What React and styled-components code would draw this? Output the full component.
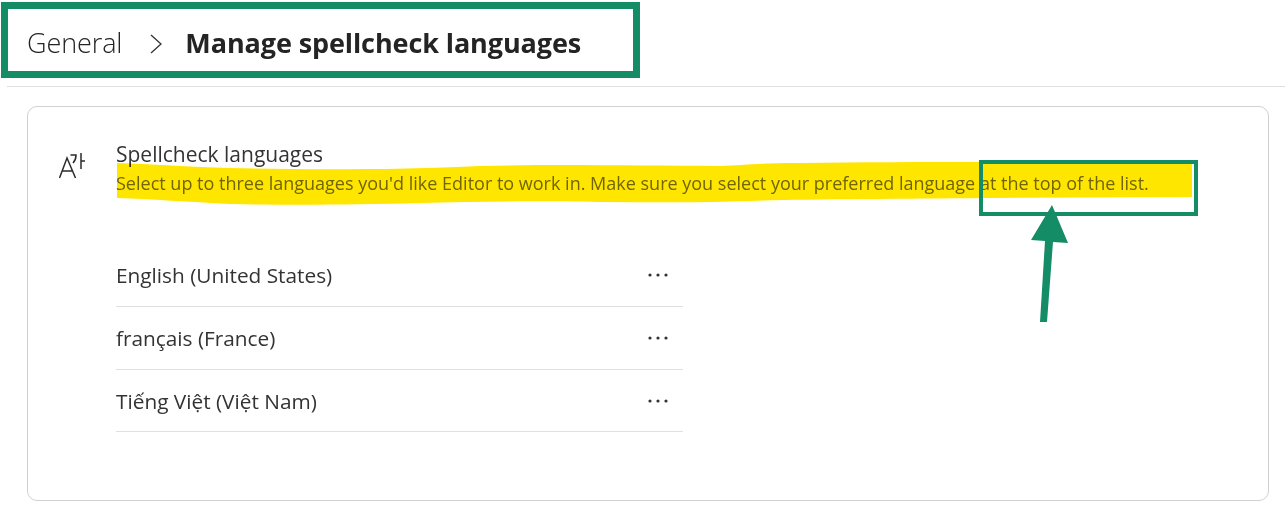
import React from 'react'
import styled, { createGlobalStyle } from 'styled-components'

const GlobalStyle = createGlobalStyle`
  html, body {
    margin: 0;
    padding: 0;
    background: #ffffff;
  }
  body {
    font-family: "Open Sans", "Noto Sans", "Liberation Sans", sans-serif;
    color: #242424;
  }
`

const Page = styled.div`
  position: relative;
  width: 1285px;
  height: 516px;
  overflow: hidden;
`

const Header = styled.header`
  height: 86px;
  margin-left: 7px;
  border-bottom: 1px solid #e0e0e0;
  box-sizing: content-box;
`

const Crumbs = styled.nav`
  display: flex;
  align-items: center;
  height: 85px;
  padding-left: 20px;
`

const Parent = styled.span`
  font-size: 27px;
  font-weight: 300;
  letter-spacing: -0.1px;
`

const Chevron = styled.svg`
  width: 14px;
  height: 20px;
  margin: 2px 22px 0 27px;
`

const Current = styled.h1`
  margin: 0;
  font-size: 27px;
  font-weight: 700;
  letter-spacing: -0.1px;
`

const Card = styled.section`
  display: flex;
  box-sizing: border-box;
  width: 1242px;
  height: 395px;
  margin: 19px 0 0 27px;
  padding: 34px 0 0 31px;
  border: 1px solid #d1d1d1;
  border-radius: 10px;
`

const IconCell = styled.svg`
  width: 26px;
  height: 28px;
  margin-top: 11px;
  flex: none;
`

const Body = styled.div`
  margin-left: 31px;
`

const Title = styled.h2`
  margin: 0;
  font-size: 21px;
  line-height: 26px;
  font-weight: 400;
  color: #333333;
`

const Description = styled.p`
  margin: 4px 0 0;
  font-size: 18px;
  line-height: 24px;
  color: #707070;
`

const LanguageList = styled.ul`
  list-style: none;
  margin: 49px 0 0;
  padding: 0;
  width: 567px;
`

const LanguageRow = styled.li`
  display: flex;
  align-items: center;
  justify-content: space-between;
  box-sizing: border-box;
  height: 63px;
  border-bottom: 1px solid #e0e0e0;
  font-size: 20.8px;
  font-weight: 400;
  color: #333333;
  &:last-child {
    height: 62px;
  }
`

const MoreDots = styled.svg`
  width: 22px;
  height: 6px;
  margin: 0 14px 0 0;
`

const Highlight = styled.svg`
  position: absolute;
  left: 0;
  top: 0;
  mix-blend-mode: multiply;
  pointer-events: none;
`

const Arrow = styled.svg`
  position: absolute;
  left: 0;
  top: 0;
  pointer-events: none;
`

const Callout = styled.div`
  position: absolute;
  box-sizing: border-box;
  border: ${(p) => p.$weight}px solid #148c65;
  left: ${(p) => p.$x}px;
  top: ${(p) => p.$y}px;
  width: ${(p) => p.$w}px;
  height: ${(p) => p.$h}px;
`

const languages = ['English (United States)', 'français (France)', 'Tiếng Việt (Việt Nam)']

export default function App() {
  return (
    <Page>
      <GlobalStyle />
      <Header>
        <Crumbs>
          <Parent>General</Parent>
          <Chevron viewBox="0 0 14 20" fill="none" stroke="#333" strokeWidth="1.3">
            <path d="M2 1l10 9-10 9" />
          </Chevron>
          <Current>Manage spellcheck languages</Current>
        </Crumbs>
      </Header>
      <Card>
        <IconCell viewBox="0 0 26 28" fill="none" stroke="#2b2b2b" strokeWidth="1.5">
          <path d="M0.5 26L8 6l8.5 20M3 19h11" />
          <path d="M11.5 3H17C17 7 16 9 14 11M22 1V17M22 9H26" />
        </IconCell>
        <Body>
          <Title>Spellcheck languages</Title>
          <Description>
            Select up to three languages you'd like Editor to work in. Make sure you select your preferred language at the top of the list.
          </Description>
          <LanguageList>
            {languages.map((name) => (
              <LanguageRow key={name}>
                {name}
                <MoreDots viewBox="0 0 22 6" fill="#333">
                  <circle cx="3" cy="3" r="1.6" />
                  <circle cx="11" cy="3" r="1.6" />
                  <circle cx="19" cy="3" r="1.6" />
                </MoreDots>
              </LanguageRow>
            ))}
          </LanguageList>
        </Body>
      </Card>

      <Highlight width="1285" height="516">
        <path
          fill="#ffe600"
          d="M117 163C150 164 190 167 230 168C300 170 400 170 480 166C560 164 650 166 720 166C745 165 760 163 800 163C860 162 920 162 985 162L1192 164L1192 197L985 198C900 199 800 199 750 201C700 203 650 202 600 202C550 201 480 201 420 203C350 205 280 205 230 204C190 202 150 199 117 198Z"
        />
      </Highlight>
      <Callout $x={1} $y={2} $w={639} $h={76} $weight={7} />
      <Callout $x={979} $y={160} $w={219} $h={56} $weight={4} />
      <Arrow width="1285" height="516">
        <path fill="#148c65" d="M1052 205L1068 243L1053 242L1047 322L1040 322L1045 241L1031 240Z" />
      </Arrow>
    </Page>
  )
}
